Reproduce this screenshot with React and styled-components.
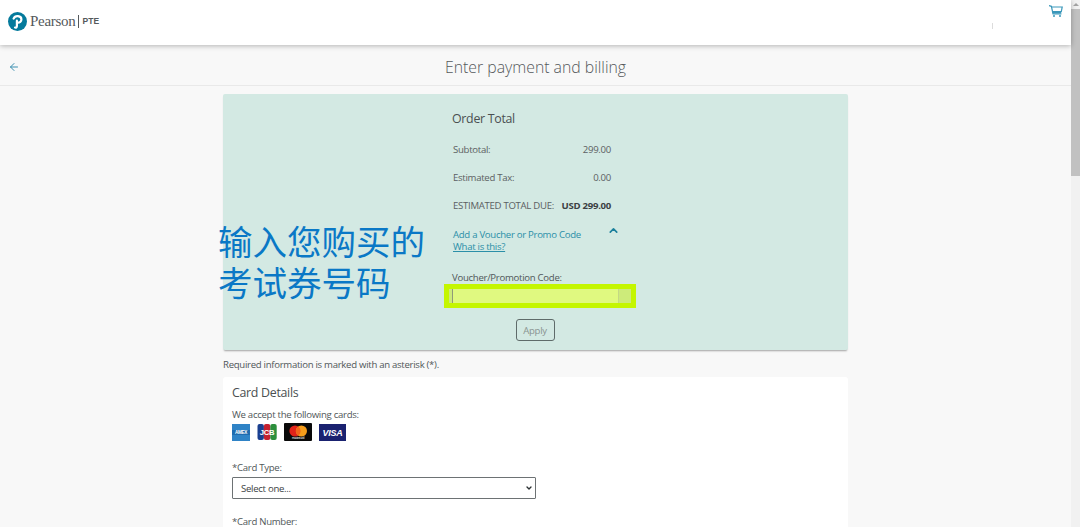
import styled, { createGlobalStyle } from "styled-components";
import { ArrowLeft, ChevronDown, ChevronUp } from "lucide-react";

const GlobalStyle = createGlobalStyle`
  html, body {
    margin: 0;
    padding: 0;
    height: 527px;
    overflow: hidden;
    background: #f8f8f8;
  }
  * { box-sizing: border-box; }
`;

const Shell = styled.div`
  display: flex;
  width: 1080px;
  height: 527px;
  overflow: hidden;
  font-family: "Open Sans", "Noto Sans CJK SC", sans-serif;
  font-size: 9.6px;
  letter-spacing: -0.29px;
  color: #505759;
  position: relative;
`;

const Page = styled.div`
  width: 1071px;
  flex: none;
  display: flex;
  flex-direction: column;
`;

const Scrollbar = styled.div`
  width: 9px;
  flex: none;
  background: #f1f1f1;
  display: flex;
  flex-direction: column;
  align-items: center;
`;

const ScrollArrow = styled.div`
  width: 0;
  height: 0;
  margin: 3px 0 3px;
  border-left: 3px solid transparent;
  border-right: 3px solid transparent;
  border-bottom: 3px solid #a3a3a3;
`;

const ScrollThumb = styled.div`
  width: 100%;
  height: 167px;
  background: #c1c1c1;
`;

const Header = styled.header`
  height: 45px;
  flex: none;
  background: #fff;
  box-shadow: 0 1px 5px rgba(0, 0, 0, 0.28);
  display: flex;
  justify-content: space-between;
  padding: 4px 8px 0 8px;
  position: relative;
`;

const Logo = styled.div`
  display: flex;
  align-items: center;
  height: 34px;
  gap: 3px;
`;

const LogoWord = styled.span`
  font-family: "Liberation Serif", serif;
  font-size: 15px;
  letter-spacing: -0.3px;
  color: #55595c;
`;

const LogoSub = styled.span`
  font-family: "Liberation Sans", sans-serif;
  font-size: 8.5px;
  letter-spacing: 0.1px;
  font-weight: 700;
  color: #55595c;
  border-left: 1px solid #55595c;
  padding-left: 3px;
  line-height: 13px;
`;

const HeaderRight = styled.div`
  display: flex;
  align-items: flex-start;
  gap: 56px;
`;

const Divider = styled.div`
  width: 1px;
  height: 6px;
  margin-top: 19px;
  background: #dcdcdc;
`;

const CartSvg = styled.svg`
  display: block;
  margin-top: 1px;
  color: #3a97ba;
`;

const SubHeader = styled.div`
  height: 41px;
  flex: none;
  display: grid;
  grid-template-columns: 1fr auto 1fr;
  align-items: center;
  padding-top: 4px;
  border-bottom: 1px solid #e9e9e9;
`;

const BackIcon = styled(ArrowLeft)`
  color: #3a8fb0;
  width: 12px;
  height: 12px;
  margin-left: 8px;
`;

const SubTitle = styled.h1`
  margin: 0;
  font-size: 15.8px;
  font-weight: 300;
  letter-spacing: 0;
  line-height: 22px;
  color: #55595b;
`;

const Content = styled.main`
  width: 625px;
  margin: 8px 0 0 223px;
  flex: none;
`;

const OrderCard = styled.section`
  height: 256px;
  background: #d3e9e3;
  border-radius: 2px;
  box-shadow: 0 2px 2px -1px rgba(0, 0, 0, 0.35);
  padding: 16px 0 0 229px;
  display: flex;
  flex-direction: column;
`;

const OrderTitle = styled.h2`
  margin: 0 0 8px;
  font-size: 12.4px;
  font-weight: 400;
  letter-spacing: -0.3px;
  line-height: 17px;
  color: #4a4f51;
`;

const Summary = styled.div`
  width: 158px;
  margin-left: 1px;
`;

const SummaryRow = styled.div`
  display: flex;
  justify-content: space-between;
  height: 28px;
  align-items: center;
  white-space: nowrap;
  color: #5b6062;
`;

const Strong = styled.strong`
  font-weight: 700;
  color: #3c4143;
`;

const VoucherToggle = styled.div`
  width: 167px;
  margin: 10px 0 0 1px;
  display: flex;
  justify-content: space-between;
  align-items: flex-start;
  line-height: 12px;
  color: #2b8fa8;
`;

const HelpLink = styled.a`
  display: block;
  text-decoration: underline;
  color: #2b8fa8;
`;

const Chevron = styled(ChevronUp)`
  width: 13px;
  height: 13px;
  color: #1a7f9c;
  stroke-width: 3;
  margin-top: -5px;
`;

const FieldLabel = styled.label`
  display: block;
  line-height: 12px;
  margin-top: 19px;
  color: #505759;
`;

const VoucherOutline = styled.div`
  width: 192px;
  height: 24px;
  margin: 0 0 0 -8px;
  border: 5px solid #c4f600;
  display: flex;
  background: #cdeb7a;
`;

const VoucherInput = styled.div`
  width: 167px;
  margin-left: 3px;
  background: #e0f980;
  border-left: 1px solid #8f9a78;
  border-right: 1px solid #c4d884;
`;

const ApplyRow = styled.div`
  width: 166px;
  margin-top: 11px;
  display: flex;
  justify-content: center;
`;

const ApplyButton = styled.button`
  width: 39px;
  height: 22px;
  padding: 0;
  font: inherit;
  letter-spacing: inherit;
  color: #8a9492;
  background: transparent;
  border: 1px solid #5f6b6a;
  border-radius: 3px;
`;

const Note = styled.p`
  margin: 8px 0 5px;
  line-height: 14px;
  color: #505759;
`;

const DetailsCard = styled.section`
  height: 300px;
  background: #fff;
  border-radius: 3px;
  padding: 7px 9px;
`;

const DetailsTitle = styled.h2`
  margin: 0 0 7px;
  font-size: 12.4px;
  font-weight: 400;
  letter-spacing: -0.3px;
  line-height: 17px;
  color: #4a4f51;
`;

const Accept = styled.div`
  line-height: 14px;
  margin-bottom: 1px;
`;

const CardLogos = styled.div`
  display: flex;
  align-items: center;
  height: 18px;
  gap: 7px;
`;

const LogoSvg = styled.svg`
  display: block;
  flex: none;
`;

const Amex = () => (
  <LogoSvg width="18" height="17" viewBox="0 0 18 17">
    <rect width="18" height="17" fill="#2f83c6" />
    <rect y="6" width="18" height="5" fill="#1f6cb0" />
    <text x="9" y="10.4" fontSize="4.6" fontWeight="700" fontFamily="Liberation Sans" fill="#fff" textAnchor="middle">AMEX</text>
  </LogoSvg>
);

const Jcb = () => (
  <LogoSvg width="20" height="16" viewBox="0 0 20 16">
    <rect x="0.5" width="6.4" height="16" rx="2" fill="#1a3f8f" />
    <rect x="6.9" width="6.4" height="16" rx="2" fill="#c4202f" />
    <rect x="13.3" width="6.4" height="16" rx="2" fill="#2c8f3c" />
    <text x="10" y="11" fontSize="7.6" fontWeight="700" fontFamily="Liberation Sans" fill="#fff" textAnchor="middle">JCB</text>
  </LogoSvg>
);

const Mastercard = () => (
  <LogoSvg width="28" height="18" viewBox="0 0 28 18">
    <rect width="28" height="18" rx="1" fill="#0a0a0a" />
    <circle cx="11" cy="8" r="5.6" fill="#e2231a" />
    <circle cx="17.4" cy="8" r="5.6" fill="#f79e1b" />
    <path d="M14.2 3.4a5.6 5.6 0 0 1 0 9.2a5.6 5.6 0 0 1 0-9.2z" fill="#f2641c" />
    <text x="14" y="16.3" fontSize="3" fontFamily="Liberation Sans" fill="#fff" textAnchor="middle">mastercard</text>
  </LogoSvg>
);

const Visa = () => (
  <LogoSvg width="27" height="17" viewBox="0 0 27 17">
    <rect width="27" height="17" fill="#1a2270" />
    <text x="13.5" y="12" fontSize="9" fontWeight="700" fontStyle="italic" fontFamily="Liberation Sans" fill="#fff" textAnchor="middle">VISA</text>
  </LogoSvg>
);

const FormLabel = styled.label`
  display: block;
  line-height: 14px;
  color: #505759;
`;

const TypeField = styled.div`
  margin-top: 20px;
`;

const NumberField = styled.div`
  margin-top: 16px;
`;

const SelectWrap = styled.div`
  position: relative;
  width: 304px;
  margin-top: 2px;
`;

const SelectBox = styled.select`
  display: block;
  width: 100%;
  height: 22px;
  padding: 0 8px;
  appearance: none;
  font: inherit;
  letter-spacing: inherit;
  color: #3c4143;
  background: #fff;
  border: 1px solid #6d7274;
  border-radius: 1px;
`;

const SelectArrow = styled(ChevronDown)`
  position: absolute;
  right: 3px;
  top: 7px;
  width: 8px;
  height: 8px;
  stroke-width: 4;
  color: #2c3133;
  pointer-events: none;
`;

const Annotation = styled.div`
  position: absolute;
  left: 218px;
  top: 220px;
  font-size: 34.5px;
  letter-spacing: 0;
  line-height: 41px;
  color: #0a78c6;
  white-space: pre-line;
  font-family: "Noto Sans CJK SC", sans-serif;
`;

export default function App() {
  return (
    <>
      <GlobalStyle />
      <Shell>
        <Page>
          <Header>
            <Logo>
              <svg width="19" height="21" viewBox="0 0 19 21" style={{ display: "block" }}>
                <circle cx="9.5" cy="10.5" r="9.5" fill="#047a9c" />
                <path
                  d="M7 16.5c1.2.3 1.9-.3 1.9-1.5V9.7M5.6 7.6C6.4 5.8 8.2 5 10 5.2c2 .2 3.4 1.5 3.4 3.2 0 2-1.8 3.3-3.6 3.2"
                  fill="none"
                  stroke="#fff"
                  strokeWidth="2.2"
                  strokeLinecap="round"
                />
              </svg>
              <LogoWord>Pearson</LogoWord>
              <LogoSub>PTE</LogoSub>
            </Logo>
            <HeaderRight>
              <Divider />
              <CartSvg width="14" height="13" viewBox="0 0 14 13" fill="none" stroke="currentColor" strokeWidth="1.2">
                <path d="M0 .6l2.4.7 1.6 7.6h8.4" />
                <path d="M2.6 2h10.6l-.9 4.6H3.6" />
                <path d="M3.8 8.2h8.3V6.9H3.6z" fill="currentColor" stroke="none" />
                <circle cx="5" cy="11" r="1" fill="currentColor" stroke="none" />
                <circle cx="11" cy="11" r="1" fill="currentColor" stroke="none" />
              </CartSvg>
            </HeaderRight>
          </Header>
          <SubHeader>
            <BackIcon />
            <SubTitle>Enter payment and billing</SubTitle>
            <span />
          </SubHeader>
          <Content>
            <OrderCard>
              <OrderTitle>Order Total</OrderTitle>
              <Summary>
                <SummaryRow>
                  <span>Subtotal:</span>
                  <span>299.00</span>
                </SummaryRow>
                <SummaryRow>
                  <span>Estimated Tax:</span>
                  <span>0.00</span>
                </SummaryRow>
                <SummaryRow>
                  <span>ESTIMATED TOTAL DUE:</span>
                  <Strong>USD 299.00</Strong>
                </SummaryRow>
              </Summary>
              <VoucherToggle>
                <div>
                  Add a Voucher or Promo Code
                  <HelpLink>What is this?</HelpLink>
                </div>
                <Chevron />
              </VoucherToggle>
              <FieldLabel>Voucher/Promotion Code:</FieldLabel>
              <VoucherOutline>
                <VoucherInput />
              </VoucherOutline>
              <ApplyRow>
                <ApplyButton>Apply</ApplyButton>
              </ApplyRow>
            </OrderCard>
            <Note>Required information is marked with an asterisk (*).</Note>
            <DetailsCard>
              <DetailsTitle>Card Details</DetailsTitle>
              <Accept>We accept the following cards:</Accept>
              <CardLogos>
                <Amex />
                <Jcb />
                <Mastercard />
                <Visa />
              </CardLogos>
              <TypeField>
                <FormLabel>*Card Type:</FormLabel>
                <SelectWrap>
                  <SelectBox defaultValue="">
                    <option value="">Select one...</option>
                  </SelectBox>
                  <SelectArrow />
                </SelectWrap>
              </TypeField>
              <NumberField>
                <FormLabel>*Card Number:</FormLabel>
              </NumberField>
            </DetailsCard>
          </Content>
        </Page>
        <Scrollbar>
          <ScrollArrow />
          <ScrollThumb />
        </Scrollbar>
        <Annotation>{"输入您购买的\n考试券号码"}</Annotation>
      </Shell>
    </>
  );
}
